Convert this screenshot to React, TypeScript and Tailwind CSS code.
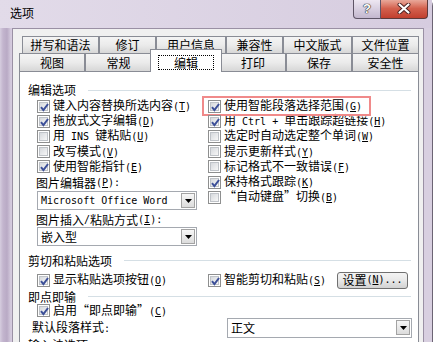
import React from "react";

const mono = "font-['DejaVu_Sans_Mono',monospace] text-[10px]";

function K({ k }: { k: string }) {
  return (
    <span className={mono}>
      (<span className="underline">{k}</span>)
    </span>
  );
}

function M({ children }: { children: React.ReactNode }) {
  return <span className={mono + " whitespace-pre"}>{children}</span>;
}

function Box({ on }: { on?: boolean }) {
  return (
    <span className="relative flex h-[13px] w-[13px] shrink-0 items-center justify-center border border-[#8e8f8f] bg-white">
      <span className="h-[9px] w-[9px] border border-[#bfc3c8] bg-gradient-to-br from-[#d6d9dd] to-[#f7f7f7]" />
      {on && (
        <svg className="absolute left-[1px] top-[1px]" width="11" height="11" viewBox="0 0 11 11">
          <path d="M2 5.2 L4.4 8.2 L9 2" fill="none" stroke="#3c4f98" strokeWidth="2" />
        </svg>
      )}
    </span>
  );
}

function Check({ on, children }: { on?: boolean; children: React.ReactNode }) {
  return (
    <div className="flex h-[15.2px] items-center gap-[3px] whitespace-nowrap">
      <Box on={on} />
      <span>{children}</span>
    </div>
  );
}

function Arrow() {
  return (
    <span className="flex h-[15px] w-[14px] items-center justify-center border border-[#a3a3a3] bg-gradient-to-b from-[#f7f7f7] to-[#dcdcdc]">
      <svg width="7" height="4" viewBox="0 0 7 4">
        <path d="M0 0 H7 L3.5 4 Z" fill="#000" />
      </svg>
    </span>
  );
}

function Heading({ children }: { children: React.ReactNode }) {
  return (
    <div className="flex h-[14px] shrink-0 items-center gap-[12px] whitespace-nowrap">
      <span>{children}</span>
      <div className="mr-[2px] h-px flex-1 bg-[#d5dfe5]" />
    </div>
  );
}

const row1 = [
  { t: "拼写和语法", c: "w-[77px]" },
  { t: "修订", c: "w-[57px]" },
  { t: "用户信息", c: "w-[70px]" },
  { t: "兼容性", c: "w-[57px]" },
  { t: "中文版式", c: "w-[69px]" },
  { t: "文件位置", c: "w-[67px]" },
];

const tabCls =
  "flex h-full items-center justify-center border border-b-0 border-[#898c95] bg-gradient-to-b from-[#f4f4f4] via-[#ebebeb] to-[#d7d7d7]";

export default function App() {
  return (
    <div className="h-[342px] w-[436px] overflow-hidden bg-white font-['Noto_Sans_CJK_SC',sans-serif] text-[12px] leading-[14px] text-black">
      <div className="-mt-[2px] flex h-[352px] w-[433px] flex-col rounded-tr-[8px] border-r border-t border-[#6c6474] bg-[#d8cfe0]">
        {/* title bar */}
        <div className="flex h-[29px] shrink-0 items-start justify-between bg-gradient-to-r from-[#e2dbe9] to-[#d6ccdf]">
          <span className="pl-[10px] pt-[7px]">选项</span>
          <div className="mr-[4px] flex">
            <div className="flex h-[20px] w-[28px] items-center justify-center rounded-bl-[4px] border border-t-0 border-[#5e5466] bg-gradient-to-b from-[#f0eaf4] via-[#d9d0e1] to-[#c3b7ce] font-['Liberation_Sans',sans-serif] text-[13px] font-bold text-white [text-shadow:0_0_1px_#222,0_0_1px_#222,0_0_1px_#222]">
              ?
            </div>
            <div className="flex h-[20px] w-[47px] items-center justify-center rounded-br-[4px] border border-l-0 border-t-0 border-[#5e3a3a] bg-gradient-to-b from-[#eab0a3] via-[#d3604d] to-[#c13f2e]">
              <svg width="14" height="11" viewBox="0 0 14 11">
                <path d="M2.5 1.5 L11.5 9.5 M11.5 1.5 L2.5 9.5" stroke="#4a2020" strokeWidth="4" strokeLinecap="round" />
                <path d="M2.5 1.5 L11.5 9.5 M11.5 1.5 L2.5 9.5" stroke="#fff" strokeWidth="2.2" strokeLinecap="round" />
              </svg>
            </div>
          </div>
        </div>

        <div className="flex flex-1">
          <div className="w-[12px] bg-[linear-gradient(to_right,#d6cddf_0px,#c3b5ce_3px,#b9aac5_7px,#d5cbde_11px)]" />
          <div className="flex flex-1 flex-col border-l border-r border-t border-[#9a90a4] bg-[#f0f0f0] pl-[6px] pr-[4px] pt-[7px]">
            {/* tabs row 1 */}
            <div className="flex h-[17px] shrink-0 pl-[3px]">
              {row1.map((r) => (
                <div key={r.t} className={tabCls + " " + r.c}>
                  {r.t}
                </div>
              ))}
            </div>
            {/* tabs row 2 */}
            <div className="flex h-[18px] shrink-0 items-end">
              <div className={tabCls + " w-[66px]"}>视图</div>
              <div className={tabCls + " w-[67px]"}>常规</div>
              <div className="relative z-10 -mx-[2px] -mb-px flex h-[23px] w-[72px] justify-center border border-b-0 border-[#898c95] bg-white pt-[5px]">
                <span className="flex h-[15px] w-[56px] items-center justify-center border border-dotted border-black">编辑</span>
              </div>
              <div className={tabCls + " w-[66px]"}>打印</div>
              <div className={tabCls + " w-[66px]"}>保存</div>
              <div className={tabCls + " w-[67px]"}>安全性</div>
            </div>

            {/* panel */}
            <div className="flex flex-1 flex-col overflow-hidden border border-[#898c95] bg-white pl-[8px] pr-[5px] pt-[11px]">
              <Heading>编辑选项</Heading>
              <div className="mt-[1.5px] flex shrink-0">
                <div className="flex w-[180px] flex-col">
                  <div className="pl-[9px]">
                    <Check on>
                      键入内容替换所选内容<K k="T" />
                    </Check>
                    <Check on>
                      拖放式文字编辑<K k="D" />
                    </Check>
                    <Check>
                      用<M> INS </M>键粘贴<K k="U" />
                    </Check>
                    <Check>
                      改写模式<K k="V" />
                    </Check>
                    <Check on>
                      使用智能指针<K k="E" />
                    </Check>
                  </div>
                  <div className="mt-[1px] flex h-[15px] items-center pl-[8px]">
                    图片编辑器<K k="P" />
                    <M>:</M>
                  </div>
                  <div className="ml-[9px] mt-[1px] flex h-[19px] w-[160px] items-center justify-between border border-[#a5a9b0] bg-white pl-[3px] pr-px">
                    <M>Microsoft Office Word</M>
                    <Arrow />
                  </div>
                  <div className="mt-[3px] flex h-[14px] items-center pl-[8px]">
                    图片插入<M>/</M>粘贴方式<K k="I" />
                    <M>:</M>
                  </div>
                  <div className="ml-[9px] flex h-[19px] w-[160px] items-center justify-between border border-[#a5a9b0] bg-white pl-[3px] pr-px">
                    <span>嵌入型</span>
                    <Arrow />
                  </div>
                </div>
                <div className="flex flex-col">
                  <div className="relative">
                    <Check on>
                      使用智能段落选择范围<K k="G" />
                    </Check>
                    <div className="absolute -left-[6px] -top-[2.5px] h-[20px] w-[169px] border-2 border-[#f08a8a]" />
                  </div>
                  <Check on>
                    用<M> Ctrl + </M>单击跟踪超链接<K k="H" />
                  </Check>
                  <Check>
                    选定时自动选定整个单词<K k="W" />
                  </Check>
                  <Check>
                    提示更新样式<K k="Y" />
                  </Check>
                  <Check>
                    标记格式不一致错误<K k="F" />
                  </Check>
                  <Check on>
                    保持格式跟踪<K k="K" />
                  </Check>
                  <Check>
                    “自动键盘”切换<K k="B" />
                  </Check>
                </div>
              </div>

              <div className="mt-[7.5px]">
                <Heading>剪切和粘贴选项</Heading>
              </div>
              <div className="mt-[3.5px] flex h-[18px] shrink-0 items-center">
                <div className="w-[180px] pl-[9px]">
                  <Check on>
                    显示粘贴选项按钮<K k="O" />
                  </Check>
                </div>
                <Check on>
                  智能剪切和粘贴<K k="S" />
                </Check>
                <div className="flex-1" />
                <div className="mr-[5px] flex h-[17px] w-[71px] items-center justify-center rounded-[3px] border border-[#707070] bg-gradient-to-b from-[#f4f4f4] via-[#e8e8e8] to-[#d2d2d2] whitespace-nowrap">
                  设置<K k="N" />
                  <M>...</M>
                </div>
              </div>
              <div className="mt-[0.5px]">
                <Heading>即点即输</Heading>
              </div>
              <div className="flex h-[14px] shrink-0 items-center pl-[9px]">
                <Check on>
                  启用“即点即输”<K k="C" />
                </Check>
              </div>
              <div className="flex h-[20px] shrink-0 items-center">
                <div className="w-[199px] pl-[4px]">
                  默认段落样式<M>:</M>
                </div>
                <div className="flex h-[20px] w-[185px] items-center justify-between border border-[#a5a9b0] bg-white pl-[3px] pr-px">
                  <span>正文</span>
                  <Arrow />
                </div>
              </div>
              <Heading>输入法选项</Heading>
            </div>
          </div>
          <div className="w-[8px]" />
        </div>
      </div>
    </div>
  );
}
